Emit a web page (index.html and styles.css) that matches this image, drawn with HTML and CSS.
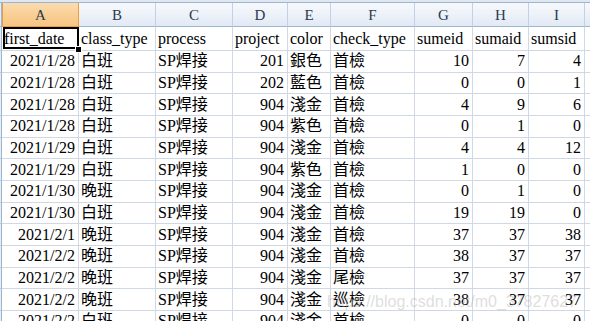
FILE: index.html
```html
<!DOCTYPE html>
<html>
<head>
<meta charset="utf-8">
<link rel="stylesheet" href="styles.css">
</head>
<body>
<div class="sheet">
  <div class="topband"></div>

  <div class="stub hstub"></div>
  <div class="h hA">A</div><div class="h">B</div><div class="h">C</div><div class="h">D</div><div class="h">E</div><div class="h">F</div><div class="h">G</div><div class="h">H</div><div class="h">I</div><div class="h hJ"></div>

  <div class="stub"></div>
  <div class="c a1">first_date<span class="sel"></span><span class="handle"></span></div><div class="c">class_type</div><div class="c">process</div><div class="c">project</div><div class="c">color</div><div class="c">check_type</div><div class="c">sumeid</div><div class="c">sumaid</div><div class="c">sumsid</div><div class="c j"></div>

  <div class="stub"></div>
  <div class="c n">2021/1/28</div><div class="c">白班</div><div class="c">SP焊接</div><div class="c n">201</div><div class="c">銀色</div><div class="c">首檢</div><div class="c n">10</div><div class="c n">7</div><div class="c n">4</div><div class="c j"></div>

  <div class="stub"></div>
  <div class="c n">2021/1/28</div><div class="c">白班</div><div class="c">SP焊接</div><div class="c n">202</div><div class="c">藍色</div><div class="c">首檢</div><div class="c n">0</div><div class="c n">0</div><div class="c n">1</div><div class="c j"></div>

  <div class="stub"></div>
  <div class="c n">2021/1/28</div><div class="c">白班</div><div class="c">SP焊接</div><div class="c n">904</div><div class="c">淺金</div><div class="c">首檢</div><div class="c n">4</div><div class="c n">9</div><div class="c n">6</div><div class="c j"></div>

  <div class="stub"></div>
  <div class="c n">2021/1/28</div><div class="c">白班</div><div class="c">SP焊接</div><div class="c n">904</div><div class="c">紫色</div><div class="c">首檢</div><div class="c n">0</div><div class="c n">1</div><div class="c n">0</div><div class="c j"></div>

  <div class="stub"></div>
  <div class="c n">2021/1/29</div><div class="c">白班</div><div class="c">SP焊接</div><div class="c n">904</div><div class="c">淺金</div><div class="c">首檢</div><div class="c n">4</div><div class="c n">4</div><div class="c n">12</div><div class="c j"></div>

  <div class="stub"></div>
  <div class="c n">2021/1/29</div><div class="c">白班</div><div class="c">SP焊接</div><div class="c n">904</div><div class="c">紫色</div><div class="c">首檢</div><div class="c n">1</div><div class="c n">0</div><div class="c n">0</div><div class="c j"></div>

  <div class="stub"></div>
  <div class="c n">2021/1/30</div><div class="c">晚班</div><div class="c">SP焊接</div><div class="c n">904</div><div class="c">淺金</div><div class="c">首檢</div><div class="c n">0</div><div class="c n">1</div><div class="c n">0</div><div class="c j"></div>

  <div class="stub"></div>
  <div class="c n">2021/1/30</div><div class="c">白班</div><div class="c">SP焊接</div><div class="c n">904</div><div class="c">淺金</div><div class="c">首檢</div><div class="c n">19</div><div class="c n">19</div><div class="c n">0</div><div class="c j"></div>

  <div class="stub"></div>
  <div class="c n">2021/2/1</div><div class="c">晚班</div><div class="c">SP焊接</div><div class="c n">904</div><div class="c">淺金</div><div class="c">首檢</div><div class="c n">37</div><div class="c n">37</div><div class="c n">38</div><div class="c j"></div>

  <div class="stub"></div>
  <div class="c n">2021/2/2</div><div class="c">晚班</div><div class="c">SP焊接</div><div class="c n">904</div><div class="c">淺金</div><div class="c">首檢</div><div class="c n">38</div><div class="c n">37</div><div class="c n">37</div><div class="c j"></div>

  <div class="stub"></div>
  <div class="c n">2021/2/2</div><div class="c">晚班</div><div class="c">SP焊接</div><div class="c n">904</div><div class="c">淺金</div><div class="c">尾檢</div><div class="c n">37</div><div class="c n">37</div><div class="c n">37</div><div class="c j"></div>

  <div class="stub"></div>
  <div class="c n">2021/2/2</div><div class="c">晚班</div><div class="c">SP焊接</div><div class="c n">904</div><div class="c">淺金</div><div class="c">巡檢</div><div class="c n">38</div><div class="c n">37</div><div class="c n">37</div><div class="c j"></div>

  <div class="stub"></div>
  <div class="c n">2021/2/2</div><div class="c">白班</div><div class="c">SP焊接</div><div class="c n">904</div><div class="c">淺金</div><div class="c">首檢</div><div class="c n">0</div><div class="c n">0</div><div class="c n">0</div><div class="c j"></div>

  <div class="watermark">https://blog.csdn.net/m0_37827627</div>
</div>
</body>
</html>
```

FILE: styles.css
```css
html, body {
  margin: 0;
  padding: 0;
  background: #ffffff;
  overflow: hidden;
}

.sheet {
  position: relative;
  width: 590px;
  height: 321px;
  overflow: hidden;
  display: grid;
  grid-template-columns: 2px 77px 77px 77px 55px 43px 84px 58px 56px 56px 1fr;
  grid-template-rows: 3px 24px 24px repeat(13, 21.667px);
  font-family: "Liberation Serif", "Noto Sans CJK TC", serif;
  font-size: 16px;
  color: #000;
}

.topband {
  grid-column: 1 / -1;
  background: #dfe7f2;
  border-bottom: 1px solid #9fb4cd;
}

.stub {
  background: #e6edf6;
  border-right: 1px solid #9eb3cc;
  border-bottom: 1px solid #b9c8da;
}

.hstub {
  background: #e6edf6;
  border-bottom: 1px solid #9eb6ce;
}

.h {
  display: flex;
  align-items: center;
  justify-content: center;
  background: linear-gradient(#f6f8fb 0%, #edf2f9 50%, #e1e9f4 100%);
  border-right: 1px solid #c2d1e4;
  border-bottom: 1px solid #9eb6ce;
  font-size: 15px;
  color: #2a3a4c;
  padding-top: 1px;
  overflow: hidden;
}

.hA {
  background: linear-gradient(#fbdcb0 0%, #f9cf96 50%, #f7c584 100%);
  border-right-color: #f29a3e;
  border-bottom-color: #f29a3e;
  border-left: 1px solid #f29a3e;
}

.hJ {
  border-right: none;
}

.c {
  display: flex;
  align-items: center;
  padding: 0 3px 0 2px;
  border-right: 1px solid #d0d7e5;
  border-bottom: 1px solid #d0d7e5;
  white-space: nowrap;
  overflow: hidden;
  line-height: 1;
}

.n {
  justify-content: flex-end;
}

.j {
  border-right: none;
}

.a1 {
  position: relative;
  overflow: visible;
  z-index: 2;
}

.sel {
  position: absolute;
  top: 0;
  left: 1px;
  right: -1px;
  bottom: 1px;
  border: 2px solid #000;
  pointer-events: none;
}

.handle {
  position: absolute;
  right: -4px;
  bottom: -3px;
  width: 5px;
  height: 5px;
  background: #000;
  border: 1px solid #fff;
}

.watermark {
  position: absolute;
  right: 13px;
  top: 294px;
  font-family: "Liberation Sans", Arial, sans-serif;
  font-size: 16px;
  line-height: 16px;
  color: rgba(170, 170, 170, 0.4);
  white-space: nowrap;
  pointer-events: none;
}
```
